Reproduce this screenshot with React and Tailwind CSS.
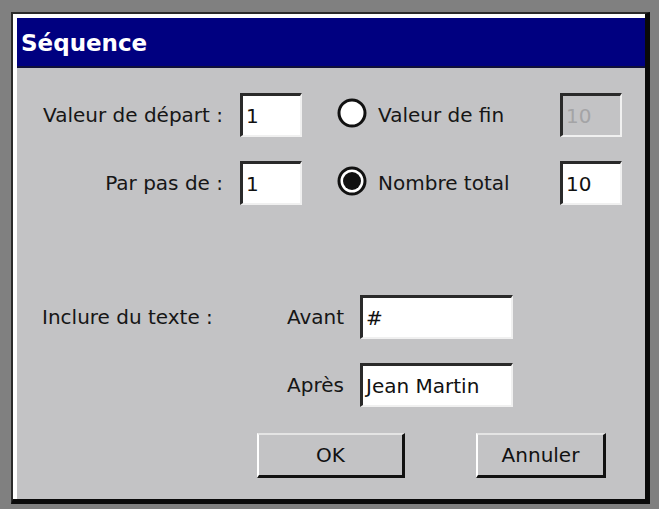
import React from 'react';

const font = { fontFamily: '"DejaVu Sans", Verdana, sans-serif' };

// sunken edit box, classic look
const Field = ({ value, width = 'w-[62px]', disabled = false }) => (
  <div
    className={`${width} h-[44px] flex items-center pl-[3px] border-t-[3px] border-l-[3px] border-t-[#2a2a2a] border-l-[#2a2a2a] border-b-2 border-r-2 border-b-[#f0f0f0] border-r-[#f0f0f0] ${
      disabled ? 'bg-[#c3c3c5] text-[#a4a4a6]' : 'bg-white text-[#111]'
    }`}
  >
    {value}
  </div>
);

const Radio = ({ checked }) => (
  <svg width="30" height="30" viewBox="0 0 30 30" className="shrink-0">
    <circle cx="15" cy="15" r="13" fill="white" stroke="#111" strokeWidth="3" />
    {checked && <circle cx="15" cy="15" r="9" fill="#111" />}
  </svg>
);

const Button = ({ children, width }) => (
  <div
    className={`${width} h-[45px] flex items-center justify-center bg-[#c3c3c5] text-[#111] border-t-2 border-l-2 border-t-[#e4e4e4] border-l-white border-b-[3px] border-r-[3px] border-b-[#111] border-r-[#111]`}
  >
    {children}
  </div>
);

export default function App() {
  return (
    <div className="w-[659px] h-[509px] bg-[#808080] pt-[12px] pl-[11px]" style={font}>
      <div className="w-[639px] h-[492px] flex flex-col border-t-2 border-l-2 border-t-[#2a2a2a] border-l-[#2a2a2a] border-r-[5px] border-b-[5px] border-r-[#0a0a0a] border-b-[#0a0a0a]">
        <div className="flex-1 flex flex-col bg-[#c3c3c5] border-t-[4px] border-l-[4px] border-white">
          {/* title bar */}
          <div className="h-[50px] shrink-0 flex items-center pl-[4px] pt-[2px] bg-[#000080] border-b-2 border-[#10103a] text-white font-bold text-[23px]">
            Séquence
          </div>

          {/* body */}
          <div className="flex-1 flex flex-col text-[20px] text-[#161616] pt-[25px]">
            <div className="flex items-center">
              <div className="w-[206px] text-right">Valeur de départ :</div>
              <div className="ml-[17px]"><Field value="1" /></div>
              <div className="ml-[35px] -mt-[4px]"><Radio checked={false} /></div>
              <div className="ml-[11px] w-[182px]">Valeur de fin</div>
              <Field value="10" disabled />
            </div>

            <div className="flex items-center mt-[24px]">
              <div className="w-[206px] text-right">Par pas de :</div>
              <div className="ml-[17px]"><Field value="1" /></div>
              <div className="ml-[35px] -mt-[4px]"><Radio checked /></div>
              <div className="ml-[11px] w-[182px]">Nombre total</div>
              <Field value="10" />
            </div>

            <div className="grid grid-cols-[253px_90px_153px] gap-y-[24px] items-center mt-[90px]">
              <div className="pl-[25px]">Inclure du texte :</div>
              <div className="text-right pr-[16px]">Avant</div>
              <Field value="#" width="w-[153px]" />
              <div />
              <div className="text-right pr-[16px]">Après</div>
              <Field value="Jean Martin" width="w-[153px]" />
            </div>

            <div className="flex mt-[26px] pl-[240px] gap-[71px]">
              <Button width="w-[148px]">OK</Button>
              <Button width="w-[130px]">Annuler</Button>
            </div>
          </div>
        </div>
      </div>
    </div>
  );
}
